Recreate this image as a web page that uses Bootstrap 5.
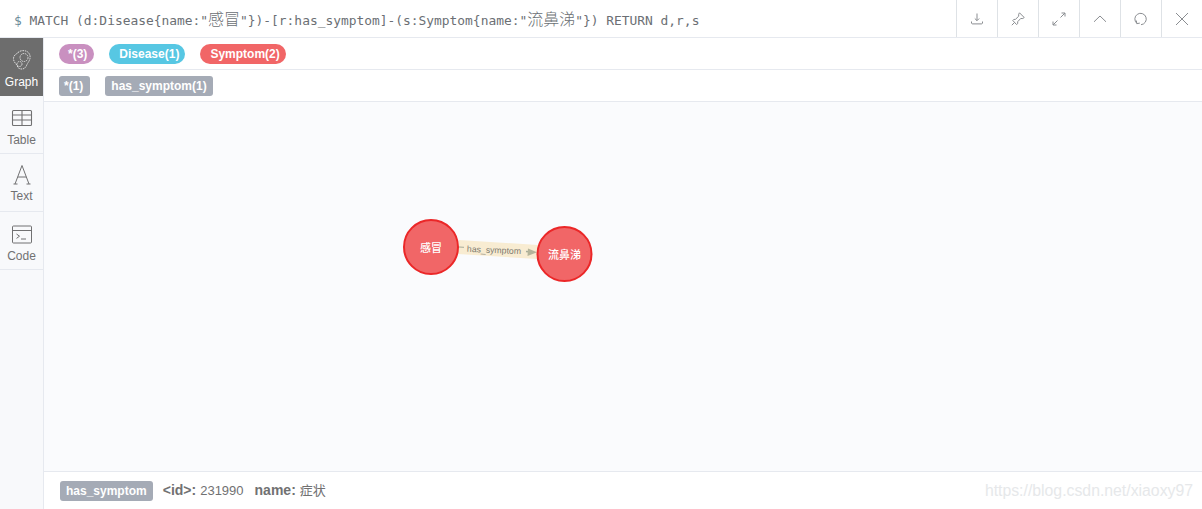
<!DOCTYPE html>
<html lang="zh">
<head>
<meta charset="utf-8">
<title>Neo4j</title>
<link rel="stylesheet" href="https://cdn.jsdelivr.net/npm/bootstrap@5.3.0/dist/css/bootstrap.min.css">
<style>
html,body{height:100%;}
body{font-family:"Liberation Sans",Arial,sans-serif;color:#717172;background:#fff;overflow:hidden;}
.frame{height:509px;}
.topbar{height:38px;border-bottom:1px solid #e6e9ef;}
.query{font-family:"DejaVu Sans Mono","Noto Sans CJK SC",monospace;font-size:12.9px;color:#6b6f74;padding-left:14px;white-space:nowrap;}
.query .cjk{font-family:"Noto Sans CJK SC",sans-serif;font-size:16px;font-weight:300;}
.query .dollar{color:#6a8a98;}
.tool{width:41px;height:37px;border-left:1px solid #e6e9ef;background:#fff;padding:0;}
.tool svg{width:16px;height:16px;fill:none;stroke:#8a8d91;stroke-width:1;}
.side{width:44px;background:#f8f9fb;border-right:1px solid #e6e9ef;flex:none;}
.tab{height:58px;border-bottom:1px solid #e6e9ef;font-size:12px;line-height:14px;color:#717172;padding-top:11px;}
.tab svg{width:24px;height:24px;display:block;fill:none;stroke:#717172;stroke-width:1;margin-bottom:2px;}
.tab.on{background:#6d6d6d;color:#fff;border-bottom:0;padding-top:10px;}
.tab.on svg{stroke:#dcdcdc;margin-bottom:3px;}
.tab.t3{padding-top:9px;}
.legend{height:32px;border-bottom:1px solid #e6e9ef;padding-left:15px;gap:15px;}
.pill{font-size:12px;font-weight:700;line-height:14px;color:#fff;padding:3px 7px;white-space:nowrap;}
.rnd{border-radius:10px;height:20px;padding:3px 7px 3px 9px;}
.rnd.wide{padding:3px 6px 3px 10px;}
.pk{background:#c990c0;}
.bl{background:#57c7e3;}
.rd{background:#f16667;}
.gy{background:#a5abb6;border-radius:3px;height:20px;padding:3px 6px;}
.gy.tight{padding:3px 7px 3px 5px;}
.canvas{background:#fafbfd;flex:1 1 auto;min-height:0;overflow:hidden;}
.canvas svg{display:block;}
.foot{height:38px;border-top:1px solid #e6e9ef;padding-left:16px;font-size:13px;color:#717172;}
.foot strong{font-size:14px;font-weight:700;margin-left:10px;margin-right:4px;}
.foot .next{margin-left:11px;}
.foot .cjk{font-family:"Noto Sans CJK SC",sans-serif;}
.mark-url{margin-left:auto;padding-right:9px;font-size:15.8px;color:#e6e8ea;}
</style>
</head>
<body>
<div class="frame d-flex flex-column">
  <div class="topbar d-flex align-items-center">
    <div class="query flex-grow-1"><span class="dollar">$</span> MATCH (d:Disease{name:"<span class="cjk">感冒</span>"})-[r:has_symptom]-(s:Symptom{name:"<span class="cjk">流鼻涕</span>"}) RETURN d,r,s</div>
    <div class="d-flex">
      <button class="tool btn rounded-0 border-0 border-start" aria-label="download"><svg viewBox="0 0 16 16"><path d="M8 2.500v7M5.800 7.500 8 9.700l2.200-2.200M2.500 10.500v1.500c0 .5.500.9 1 .9h9c.5 0 1-.4 1-.9v-1.500"/></svg></button>
      <button class="tool btn rounded-0 border-0 border-start" aria-label="pin"><svg viewBox="0 0 16 16"><path d="M9.500 1.800 14.200 6.500 12.800 7.500 10.700 7.500 7.700 10.700 7.700 12.600 6.500 13.500 2.800 9.500 3.700 8.500 5.500 8.300 8.700 5.200 8.700 3.200ZM4.500 11.500 1.800 14.200"/></svg></button>
      <button class="tool btn rounded-0 border-0 border-start" aria-label="expand"><svg viewBox="0 0 16 16"><path d="M9.500 6.500 14 2M10.500 2H14V5.500M6.500 9.500 2 14M2 10.500V14H5.500"/></svg></button>
      <button class="tool btn rounded-0 border-0 border-start" aria-label="collapse"><svg viewBox="0 0 16 16"><path d="M2 10.800 8 5 14 10.800"/></svg></button>
      <button class="tool btn rounded-0 border-0 border-start" aria-label="rerun"><svg viewBox="0 0 16 16"><path d="M3.800 12.300A5.700 5.700 0 1 1 8 13.700M3.300 9.500 3.800 12.700 6.800 12.100"/></svg></button>
      <button class="tool btn rounded-0 border-0 border-start" aria-label="close"><svg viewBox="0 0 16 16"><path d="M2 2 14 14M14 2 2 14"/></svg></button>
    </div>
  </div>
  <div class="d-flex flex-grow-1" style="min-height:0">
    <div class="side">
      <div class="tab on text-center d-flex flex-column align-items-center">
        <svg viewBox="0 0 24 24"><path d="M8 4.500c2-2 6-2.500 9-1 2.500 1.500 3.500 4 3 7-.4 2-1.500 3.500-2.500 5-1 1.800-1.500 4-3.500 5-2 .9-4 .6-5.500-.5-1.200-1-1-2.500-2.500-4-1.200-1.400-2.500-3-2.500-5.500 0-2.500 2-4.500 4.500-5.500Z" stroke-dasharray="1.600 .8"/><circle cx="14" cy="9.500" r="4" stroke-dasharray="1.600 .8"/><circle cx="9.500" cy="16" r="2.500" stroke-dasharray="1.600 .8"/></svg>
        Graph
      </div>
      <div class="tab text-center d-flex flex-column align-items-center">
        <svg viewBox="0 0 24 24"><path d="M3.500 3.500h17a1 1 0 0 1 1 1v13a1 1 0 0 1-1 1h-17a1 1 0 0 1-1-1v-13a1 1 0 0 1 1-1ZM2.500 8h19M2.500 13h19M12 3.500v15" stroke-width="1.100"/></svg>
        Table
      </div>
      <div class="tab t3 text-center d-flex flex-column align-items-center">
        <svg viewBox="0 0 24 24"><path d="M5 21 12 2.500 19 21M3.500 21h4M16.500 21h4M7.800 14h8.400"/></svg>
        Text
      </div>
      <div class="tab text-center d-flex flex-column align-items-center">
        <svg viewBox="0 0 24 24"><path d="M3.500 3h17a1 1 0 0 1 1 1v15a1 1 0 0 1-1 1h-17a1 1 0 0 1-1-1V4a1 1 0 0 1 1-1ZM2.500 7.500h19M6.500 11 9.500 13.200 6.500 15.400M11 16h5"/></svg>
        Code
      </div>
    </div>
    <div class="d-flex flex-column flex-grow-1" style="min-width:0">
      <div class="legend d-flex align-items-center">
        <span class="pill rnd pk">*(3)</span>
        <span class="pill rnd wide bl">Disease(1)</span>
        <span class="pill rnd wide rd">Symptom(2)</span>
      </div>
      <div class="legend d-flex align-items-center">
        <span class="pill gy tight">*(1)</span>
        <span class="pill gy">has_symptom(1)</span>
      </div>
      <div class="canvas">
        <svg width="1158" height="369" viewBox="44 102 1158 369" font-family="'Liberation Sans','Noto Sans CJK SC',sans-serif">
          <polygon points="459,240 538,245 537,259 458,254" fill="#f8ecd2"/>
          <line x1="459" y1="247" x2="464" y2="247.300" stroke="#a5ab9a"/>
          <line x1="526" y1="251.600" x2="532" y2="252" stroke="#a5ab9a" stroke-width="1.500"/>
          <polygon points="537,252.300 528,248.500 527.500,256" fill="#b4b49a"/>
          <text x="494" y="253" font-size="8.700" fill="#7c7a70" text-anchor="middle" transform="rotate(2.500 494 250)">has_symptom</text>
          <circle cx="431" cy="247" r="27" fill="#f16667" stroke="#eb2728" stroke-width="2"/>
          <circle cx="564.500" cy="254" r="27" fill="#f16667" stroke="#eb2728" stroke-width="2"/>
          <text x="431" y="252" font-size="11" font-weight="500" fill="#fff" text-anchor="middle">感冒</text>
          <text x="564.500" y="259" font-size="11" font-weight="500" fill="#fff" text-anchor="middle">流鼻涕</text>
        </svg>
      </div>
      <div class="foot d-flex align-items-center">
        <span class="pill gy">has_symptom</span>
        <div class="d-flex align-items-baseline">
          <strong>&lt;id&gt;:</strong><span>231990</span>
          <strong class="next">name:</strong><span class="cjk">症状</span>
        </div>
        <span class="mark-url">https://blog.csdn.net/xiaoxy97</span>
      </div>
    </div>
  </div>
</div>
<script src="https://cdn.jsdelivr.net/npm/bootstrap@5.3.0/dist/js/bootstrap.bundle.min.js"></script>
</body>
</html>
